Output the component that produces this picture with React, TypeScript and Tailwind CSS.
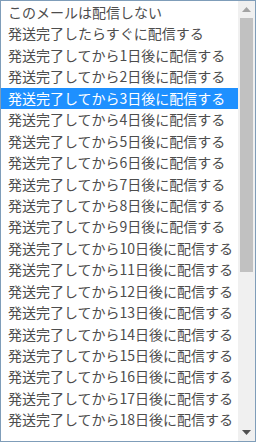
import React from "react";

const options: string[] = [
  "このメールは配信しない",
  "発送完了したらすぐに配信する",
  ...Array.from({ length: 18 }, (_, i) => `発送完了してから${i + 1}日後に配信する`),
];

export default function App() {
  return (
    <div
      className="w-[256px] h-[442px] border border-[#7f9db9] bg-white flex overflow-hidden"
      style={{ fontFamily: '"Noto Sans CJK JP", "Noto Sans", sans-serif' }}
    >
      <div className="flex-1 flex flex-col pt-[1px] overflow-hidden">
        {options.map((o, i) => (
          <div
            key={i}
            className={
              "h-[21.45px] shrink-0 pl-[7px] text-[14px] leading-[21px] whitespace-nowrap " +
              (i === 4 ? "bg-[#1e90ff] text-white" : "text-[#4d4d4d]")
            }
          >
            {o}
          </div>
        ))}
      </div>
      <div className="w-[17px] bg-[#f0f0f0] flex flex-col items-center shrink-0">
        <div className="h-[17px] w-full flex items-center justify-center">
          <svg width="9" height="5" viewBox="0 0 9 5">
            <polygon points="4.5,0 9,5 0,5" fill="#a3a3a3" />
          </svg>
        </div>
        <div className="w-[13px] h-[254px] bg-[#c1c1c1]" />
        <div className="flex-1" />
        <div className="h-[17px] w-full flex items-center justify-center">
          <svg width="9" height="5" viewBox="0 0 9 5">
            <polygon points="0,0 9,0 4.5,5" fill="#505050" />
          </svg>
        </div>
      </div>
    </div>
  );
}
